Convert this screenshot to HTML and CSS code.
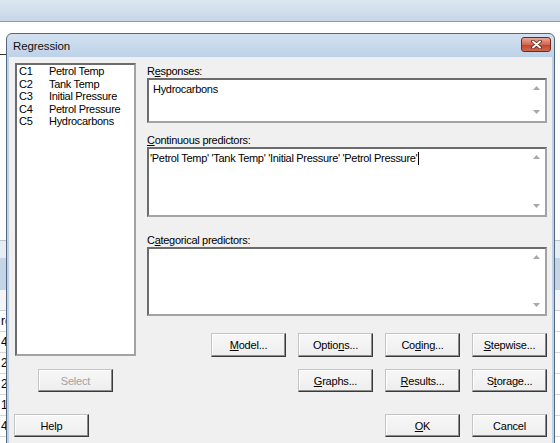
FILE: index.html
```html
<!DOCTYPE html>
<html lang="en">
<head>
    <meta charset="UTF-8">
    <title>Regression</title>
    <link rel="stylesheet" href="styles.css">
</head>
<body>
    <div class="desk">
        <div class="topbar"></div>
        <div class="work">
            <div class="edge-line"></div>
            <div class="sheet-top"></div>
            <div class="sheet-band"></div>
            <div class="sheet-sub"></div>
            <div class="row">re</div>
            <div class="row">4</div>
            <div class="row">2</div>
            <div class="row">2</div>
            <div class="row">1</div>
            <div class="row">4</div>
            <div class="row"></div>
        </div>

        <div class="dialog">
            <div class="titlebar">
                <span class="title">Regression</span>
                <span class="close">
                    <svg width="11" height="9" viewBox="0 0 11 9">
                        <path d="M2 1.5l7 6M9 1.5l-7 6" stroke="#5b1d14" stroke-width="3.6" stroke-linecap="round"/>
                        <path d="M2 1.5l7 6M9 1.5l-7 6" stroke="#fff" stroke-width="2" stroke-linecap="round"/>
                    </svg>
                </span>
            </div>

            <div class="client">
                <div class="cols main">
                    <div class="listbox">
                        <div class="item"><span>C1</span><span>Petrol Temp</span></div>
                        <div class="item"><span>C2</span><span>Tank Temp</span></div>
                        <div class="item"><span>C3</span><span>Initial Pressure</span></div>
                        <div class="item"><span>C4</span><span>Petrol Pressure</span></div>
                        <div class="item"><span>C5</span><span>Hydrocarbons</span></div>
                    </div>

                    <div class="fields">
                        <div class="label first">R<u>e</u>sponses:</div>
                        <div class="box resp">
                            <div class="txt">Hydrocarbons</div>
                            <div class="sb">
                                <svg width="7" height="4"><path d="M0 4h7L3.5 0z"/></svg>
                                <svg width="7" height="4"><path d="M0 0h7L3.5 4z"/></svg>
                            </div>
                        </div>

                        <div class="label">
                            <u>C</u>ontinuous predictors:
                        </div>
                        <div class="box cont">
                            <div class="txt tight">'Petrol Temp' 'Tank Temp' 'Initial Pressure' 'Petrol Pressure'<span class="caret"></span></div>
                            <div class="sb">
                                <svg width="7" height="4"><path d="M0 4h7L3.5 0z"/></svg>
                                <svg width="7" height="4"><path d="M0 0h7L3.5 4z"/></svg>
                            </div>
                        </div>

                        <div class="label wide">C<u>a</u>tegorical predictors:</div>
                        <div class="box cat">
                            <div class="txt"></div>
                            <div class="sb">
                                <svg width="7" height="4"><path d="M0 4h7L3.5 0z"/></svg>
                                <svg width="7" height="4"><path d="M0 0h7L3.5 4z"/></svg>
                            </div>
                        </div>

                        <div class="btn-row first-row">
                            <button class="btn"><u>M</u>odel...</button>
                            <button class="btn">Optio<u>n</u>s...</button>
                            <button class="btn">Co<u>d</u>ing...</button>
                            <button class="btn"><u>S</u>tepwise...</button>
                        </div>
                    </div>
                </div>

                <div class="cols mid">
                    <div class="center">
                        <button class="btn" disabled>Select</button>
                    </div>
                    <div class="btn-row">
                        <button class="btn"><u>G</u>raphs...</button>
                        <button class="btn"><u>R</u>esults...</button>
                        <button class="btn">S<u>t</u>orage...</button>
                    </div>
                </div>

                <div class="cols foot">
                    <div>
                        <button class="btn help">Help</button>
                    </div>
                    <div class="btn-row">
                        <button class="btn"><u>O</u>K</button>
                        <button class="btn">Cancel</button>
                    </div>
                </div>
            </div>
        </div>
    </div>
</body>
</html>
```

FILE: styles.css
```css
* {
    margin: 0;
    padding: 0;
    box-sizing: border-box;
}

body {
    width: 560px;
    height: 443px;
    overflow: hidden;
    background: #fff;
    font-family: "Liberation Sans", Arial, sans-serif;
    font-size: 11px;
    color: #000;
}

.desk {
    position: relative;
    height: 443px;
    overflow: hidden;
}

/* background window behind the dialog */
.topbar {
    height: 22px;
    background: linear-gradient(#dde7f2, #c6d6e7);
    border-bottom: 1px solid #8d9cab;
}

.work {
    background: #fbfcfd;
}

.edge-line {
    width: 12px;
    height: 1px;
    margin-top: 32px;
    background: #333;
}

.sheet-top {
    height: 18px;
    margin-top: 185px;
    background: #e7edf4;
    border-top: 1px solid #b9c4cf;
}

.sheet-band {
    height: 32px;
    background: #c5d5e8;
}

.sheet-sub {
    height: 21px;
    background: #f3f5f8;
    border-bottom: 1px solid #c9ced4;
}

.row {
    height: 21px;
    line-height: 20px;
    border-bottom: 1px solid #d6d6d6;
    font-size: 12px;
    padding-left: 1px;
    background: #fff;
}

/* dialog */
.dialog {
    position: absolute;
    left: 6px;
    top: 33px;
    width: 549px;
    height: 430px;
    border: 1px solid #55677a;
    border-radius: 6px 6px 0 0;
    background: linear-gradient(#d3e1f0, #bcd1e8 24px, #bed2e8);
    padding: 0 2px;
    display: flex;
    flex-direction: column;
}

.titlebar {
    height: 23px;
    display: flex;
    justify-content: space-between;
    align-items: center;
    padding: 0 1px 0 4px;
}

.title {
    font-size: 11.5px;
    color: #111;
    letter-spacing: -0.1px;
}

.close {
    align-self: flex-start;
    margin-top: 3px;
    width: 30px;
    height: 15px;
    border: 1px solid #6f2a20;
    border-radius: 3px;
    background: linear-gradient(#e9a899, #d5664f 50%, #c2432c 52%, #cf6a50);
    display: flex;
    justify-content: center;
    align-items: center;
}

.client {
    flex: 1;
    background: #f0f0f0;
    padding: 6px 5px 0 6px;
}

.cols {
    display: grid;
    grid-template-columns: 121px 400px;
    column-gap: 11px;
}

.main {
    height: 294px;
}

.listbox {
    height: 293px;
    background: #fff;
    border: 2px solid;
    border-color: #6c6c6c #a3a3a3 #a3a3a3 #6c6c6c;
    padding: 0 2px;
    letter-spacing: -0.3px;
}

.item {
    display: grid;
    grid-template-columns: 30px auto;
    line-height: 12.5px;
}

.fields {
    display: flex;
    flex-direction: column;
}

.label {
    height: 13px;
    line-height: 13px;
    margin-top: 11px;
    letter-spacing: -0.3px;
}

.label.first {
    margin-top: 0;
    height: 15px;
    padding-top: 2px;
}

.label.wide {
    margin-top: 17px;
}

.box {
    display: flex;
    background: #fff;
    border: 2px solid;
    border-color: #6c6c6c #a3a3a3 #a3a3a3 #6c6c6c;
}

.resp {
    height: 45px;
}

.cont {
    height: 70px;
}

.cat {
    height: 69px;
}

.txt {
    flex: 1;
    padding: 3px 0 0 4px;
    line-height: 13px;
    letter-spacing: -0.3px;
    white-space: nowrap;
}

.txt.tight {
    padding-left: 1px;
}

.caret {
    display: inline-block;
    width: 1px;
    height: 13px;
    margin-left: 1px;
    vertical-align: top;
    background: #000;
}

.sb {
    width: 17px;
    display: flex;
    flex-direction: column;
    justify-content: space-between;
    align-items: center;
    padding: 6px 0 7px;
}

.sb svg {
    display: block;
    fill: #a8a8a8;
}

.btn-row {
    display: flex;
    justify-content: flex-end;
    gap: 12px;
}

.btn-row.first-row {
    margin-top: 17px;
}

.btn {
    width: 75px;
    height: 24px;
    font-family: inherit;
    font-size: 11px;
    letter-spacing: -0.2px;
    color: #000;
    background: linear-gradient(#f7f7f7, #eeeeee);
    border: 1px solid;
    border-color: #c4c4c4 #3a3a3a #3a3a3a #c4c4c4;
    box-shadow: inset -1px -1px 0 #8c8c8c, inset 1px 1px 0 #fff;
}

.btn:disabled {
    color: #a2a2a2;
}

.mid {
    margin-top: 12px;
}

.mid .btn {
    height: 23px;
}

.center {
    display: flex;
    justify-content: center;
}

.foot {
    margin-top: 22px;
}

.foot .btn {
    height: 23px;
}

.help {
    margin-left: -1px;
}
```
